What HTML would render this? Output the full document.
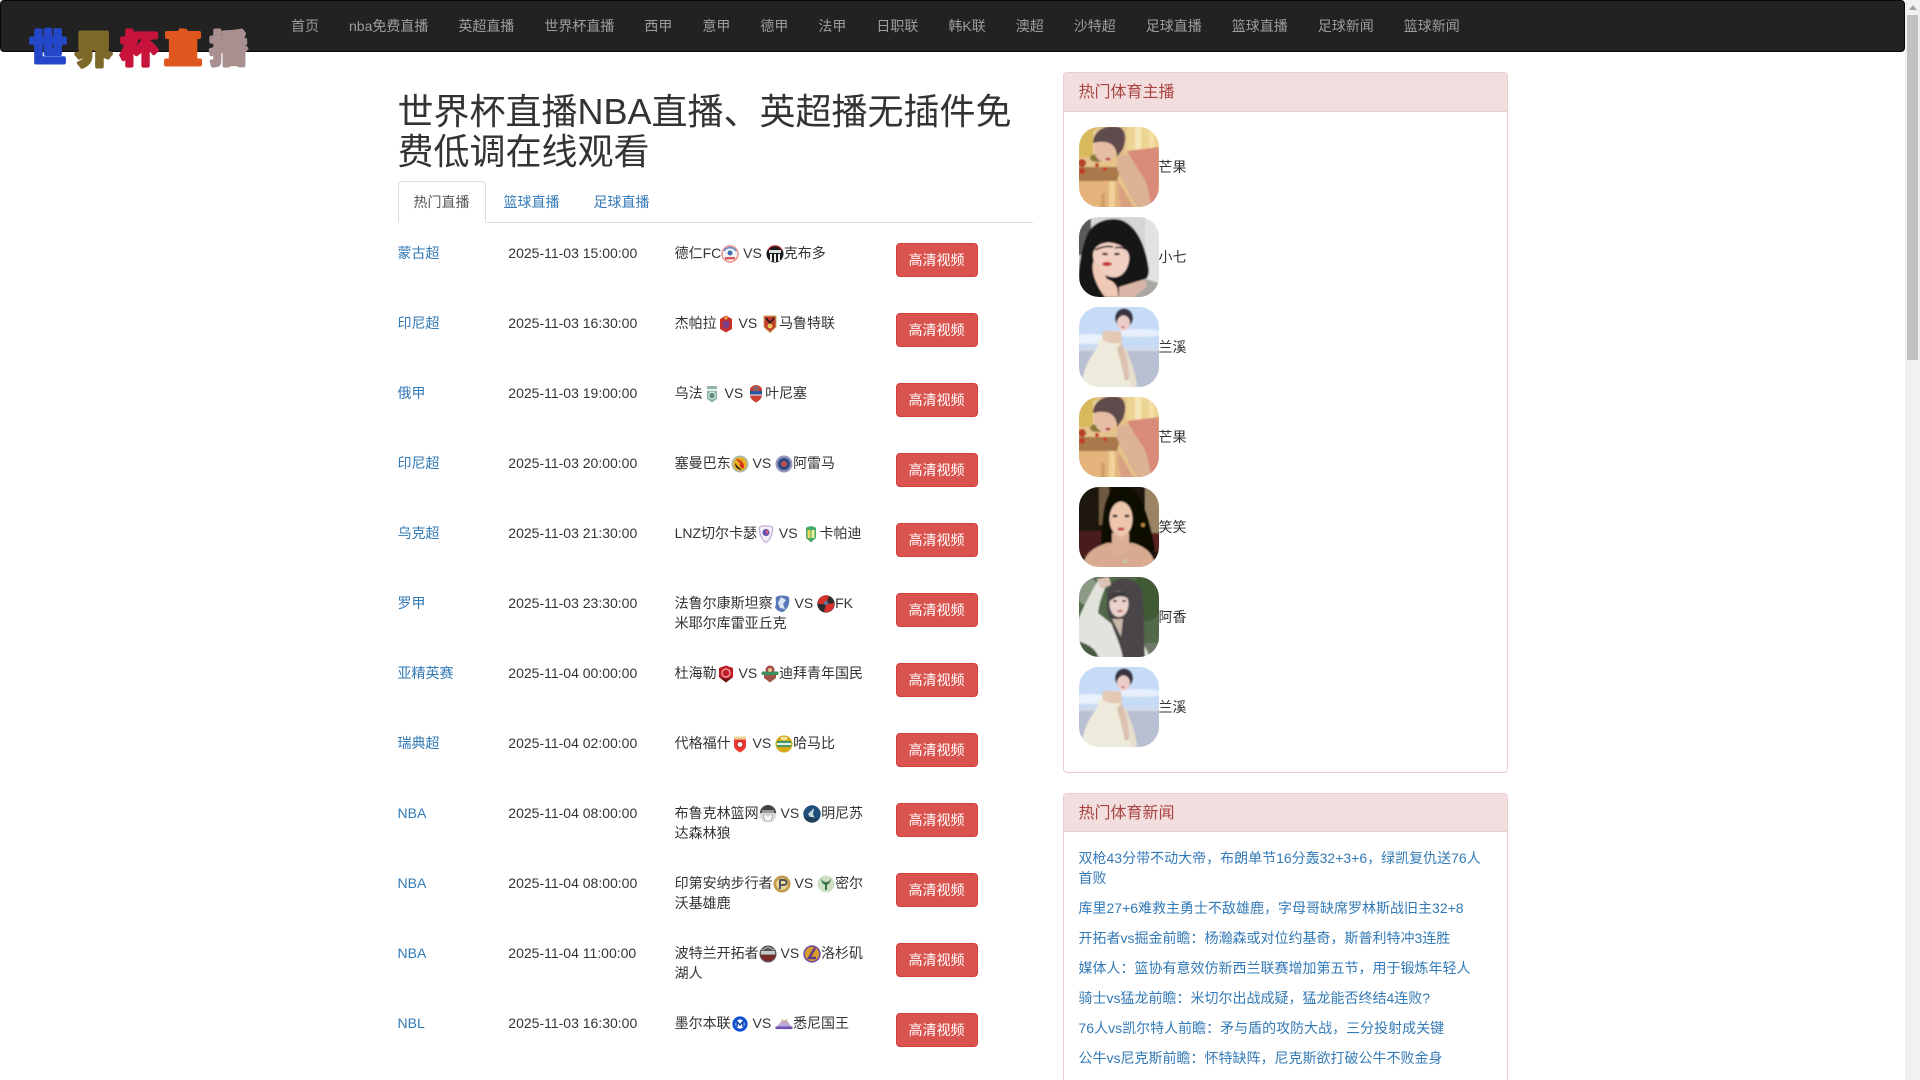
<!DOCTYPE html>
<html lang="zh-CN">
<head>
<meta charset="utf-8">
<title>世界杯直播</title>
<style>
*{box-sizing:border-box}
html,body{margin:0;padding:0;width:1920px;height:1080px;overflow:hidden;background:#fff}
body{font:14px/20px "Liberation Sans","WenQuanYi Zen Hei",sans-serif;color:#333;position:relative}
a{color:#337ab7;text-decoration:none}
.navbar{position:absolute;left:0;top:0;width:1905px;height:52px;background:#222;border:1px solid #080808;border-radius:4px}
.nav{position:absolute;left:275px;top:0;white-space:nowrap;display:flex}
.nav a{color:#9d9d9d;padding:15px;line-height:20px;display:block}
.logo{position:absolute;left:0;top:0;z-index:5}
.sb{position:absolute;left:1905px;top:0;width:15px;height:1080px;background:#f1f1f1}
.sb i{position:absolute;left:2px;top:15px;width:11px;height:345px;background:#c1c1c1}
.sb b{position:absolute;left:3.5px;top:5px;width:0;height:0;border-left:4px solid transparent;border-right:4px solid transparent;border-bottom:5px solid #a3a3a3}
h1{position:absolute;left:397.5px;top:92px;width:635px;margin:0;font-size:36px;line-height:39.6px;font-weight:500;color:#333}
.tabs{position:absolute;left:397.5px;top:181px;width:635px;height:42px;border-bottom:1px solid #ddd;display:flex}
.tabs a{display:block;padding:10px 15px;line-height:20px;margin-right:2px;height:42px;border:1px solid transparent;border-radius:4px 4px 0 0}
.tabs a.on{color:#555;background:#fff;border:1px solid #ddd;border-bottom-color:#fff}
.row{position:absolute;left:382.5px;width:665px}
.row>div{position:absolute;top:0}
.c1{left:15px}
.c2{left:125.8px;white-space:nowrap}
.c3{left:292.1px;width:191.7px}
.c3 svg{vertical-align:middle}
.btn{left:513px;width:82px;height:34px;background:#d9534f;border:1px solid #d43f3a;border-radius:4px;color:#fff;text-align:center;line-height:32px}
.panel{position:absolute;left:1062.5px;width:445px;border:1px solid #ebccd1;border-radius:4px;background:#fff}
.ph{background:#f2dede;color:#a94442;border-bottom:1px solid #ebccd1;padding:11px 15px 0;font-size:16px;line-height:18px;height:38.6px;border-radius:3px 3px 0 0}
.anchors{padding:15px 15px 5px}
.an{height:90px}
.an span{vertical-align:middle}
.an .av{display:inline-block;width:80px;height:80px;border-radius:20px;overflow:hidden;vertical-align:middle}
.av svg{display:block}
.news{padding:15.4px 15px 15px}
.news a{display:block;margin-bottom:10px}
</style>
</head>
<body>
<svg width="0" height="0" style="position:absolute">
<defs>
<filter id="bl" x="-10%" y="-10%" width="120%" height="120%"><feGaussianBlur stdDeviation="0.9"/></filter>
<symbol id="p1" viewBox="0 0 80 80"><g filter="url(#bl)">
<rect x="-2" y="-2" width="84" height="84" fill="#e5c38a"/>
<rect x="-2" y="-2" width="18" height="32" fill="#d8b95c"/>
<rect x="48" y="-2" width="34" height="26" fill="#ecd494"/>
<rect x="56" y="0" width="6" height="24" fill="#f6e7b8"/>
<rect x="70" y="0" width="5" height="24" fill="#f4dfa6"/>
<rect x="14" y="4" width="18" height="26" fill="#e9d2a0"/>
<path d="M-2 40H42L38 54H-2Z" fill="#a9794c"/>
<path d="M-2 54H40V82H-2Z" fill="#e4b47c"/>
<rect x="30" y="54" width="6" height="28" fill="#f0d29a"/>
<rect x="22" y="66" width="4" height="16" fill="#cfa068"/>
<circle cx="3" cy="36" r="4" fill="#b8402a"/><circle cx="3" cy="44" r="3" fill="#c23a26"/>
<circle cx="18" cy="38" r="2" fill="#c83a26"/><circle cx="26" cy="42" r="2" fill="#c43a28"/>
<ellipse cx="18" cy="31" rx="7" ry="4" fill="#8a7a3a"/>
<path d="M38 30C48 24 62 30 70 38L80 42V82H60C50 70 44 52 38 42Z" fill="#dcb394"/>
<path d="M48 24L80 20V76L72 80C70 66 68 52 60 44Z" fill="#d98a78"/>
<path d="M40 56C46 64 50 74 56 82H42C40 72 38 62 40 56Z" fill="#d8a080"/>
<ellipse cx="26" cy="22" rx="11" ry="13" fill="#e6bda5"/>
<path d="M14 16C14 2 30 -3 40 0C48 3 47 14 44 22L38 30C38 22 34 16 26 15C20 14 16 16 14 16Z" fill="#5e4c4c"/>
<ellipse cx="29" cy="32" rx="2.5" ry="1.3" fill="#b33a3a"/>
</g></symbol>
<symbol id="p2" viewBox="0 0 80 80"><g filter="url(#bl)">
<rect x="-2" y="-2" width="84" height="84" fill="#d6d6d6"/>
<rect x="-2" y="-2" width="14" height="40" fill="#5a5a5a"/>
<rect x="66" y="0" width="16" height="80" fill="#e2e2e2"/>
<path d="M2 82C-4 60 2 34 8 18C14 4 30 0 42 3C56 8 64 24 68 42C70 52 72 60 64 64C54 68 44 70 38 82Z" fill="#141214"/>
<path d="M50 72L66 62L80 66V82H46Z" fill="#a9a7a2"/>
<path d="M40 70L66 62L68 70L52 82H40Z" fill="#d8b5a6"/>
<path d="M14 38C14 28 26 24 34 26C44 28 52 34 50 44C48 56 40 62 32 60C22 58 14 50 14 38Z" fill="#f1d0c2"/>
<path d="M15 44C22 48 26 58 28 62C34 64 40 68 39 80H26C18 70 12 56 14 46Z" fill="#efc8b6"/>
<path d="M16 33Q26 28 34 30M36 31Q42 29 48 33" stroke="#2a1f1f" stroke-width="1.6" fill="none"/>
<ellipse cx="26" cy="37" rx="3" ry="1.3" fill="#33282a"/><ellipse cx="38" cy="37" rx="3" ry="1.3" fill="#33282a"/>
<ellipse cx="28" cy="47" rx="5" ry="2" fill="#c6323e"/>
</g></symbol>
<symbol id="p3" viewBox="0 0 80 80"><g filter="url(#bl)">
<rect x="-2" y="-2" width="84" height="84" fill="#c6dbf6"/>
<ellipse cx="60" cy="26" rx="26" ry="4" fill="#e6effb"/>
<ellipse cx="12" cy="32" rx="22" ry="5" fill="#eaf1fb"/>
<rect x="-2" y="40" width="84" height="42" fill="#b9bfd2"/>
<path d="M-2 40H82V44H-2Z" fill="#d2d9e8"/>
<ellipse cx="45" cy="11" rx="9" ry="9.5" fill="#38363f"/>
<ellipse cx="44.5" cy="16" rx="6.5" ry="7.5" fill="#ecccc8"/>
<path d="M24 24L42 24L44 48L22 46Z" fill="#e3c8b4"/>
<path d="M38 82L46 40C52 54 58 70 58 82Z" fill="#e7dfce"/>
<path d="M22 30C26 38 38 36 42 36L46 46L48 60L52 82H4C2 70 6 58 16 44Z" fill="#efebdc"/>
<path d="M42 36C48 46 50 58 50 72L46 74C44 62 40 50 38 42Z" fill="#dcc1b0"/>
<ellipse cx="44" cy="20" rx="1.5" ry="0.8" fill="#b02a30"/>
</g></symbol>
<symbol id="p4" viewBox="0 0 80 80"><g filter="url(#bl)">
<rect x="-2" y="-2" width="84" height="84" fill="#1a120c"/>
<rect x="20" y="-2" width="10" height="40" fill="#6e5a40"/>
<rect x="66" y="-2" width="16" height="50" fill="#9a8464"/>
<rect x="-2" y="44" width="24" height="26" fill="#4a1f1c"/>
<rect x="70" y="46" width="12" height="18" fill="#5a2320"/>
<path d="M21 82C24 40 20 4 42 -2C62 -2 70 30 76 62L60 82Z" fill="#0e0806"/>
<path d="M4 82C4 66 16 60 28 56H54C66 60 76 66 76 82Z" fill="#d8aa90"/>
<path d="M33 46H50V64C46 68 37 68 33 64Z" fill="#dcb098"/>
<ellipse cx="42" cy="32" rx="11.5" ry="17.5" fill="#ecc6ad"/>
<path d="M30 26C32 10 52 10 54 26C50 16 44 14 42 12C38 16 33 18 30 26Z" fill="#1a0f0a"/>
<ellipse cx="36" cy="29" rx="2.6" ry="1.2" fill="#2b1c18"/><ellipse cx="48" cy="29" rx="2.6" ry="1.2" fill="#2b1c18"/>
<ellipse cx="42" cy="42" rx="3.6" ry="1.5" fill="#c0353b"/>
<circle cx="64" cy="38" r="2" fill="#b98a3e"/>
<circle cx="46" cy="74" r="2" fill="#c8c8b0"/>
</g></symbol>
<symbol id="p5" viewBox="0 0 80 80"><g filter="url(#bl)">
<rect x="-2" y="-2" width="84" height="84" fill="#51684a"/>
<ellipse cx="68" cy="20" rx="16" ry="24" fill="#3f5a36"/>
<ellipse cx="8" cy="14" rx="12" ry="14" fill="#8a9a84"/>
<rect x="-2" y="68" width="30" height="14" fill="#4a5a44"/>
<rect x="60" y="66" width="22" height="16" fill="#6e7a66"/>
<path d="M-2 46C4 30 14 12 20 2L28 6C24 16 20 26 19 36L34 48L46 60L66 70L72 82H20C18 72 8 66 -2 64Z" fill="#e3e3de"/>
<path d="M28 14C32 -2 56 -2 62 12C66 28 64 54 66 82H44C42 66 32 50 28 32Z" fill="#49454a"/>
<ellipse cx="40" cy="27" rx="9.5" ry="13" fill="#e8d2ca"/>
<path d="M31 20C36 12 46 12 50 22C44 18 38 18 31 24Z" fill="#3e3a3e"/>
<ellipse cx="36" cy="24" rx="2" ry="1" fill="#352c2c"/><ellipse cx="45" cy="24" rx="2" ry="1" fill="#352c2c"/>
<ellipse cx="41" cy="34" rx="2.6" ry="1.1" fill="#c05a60"/>
<path d="M33 42L42 60L44 42Z" fill="#c8b8a8"/>
<path d="M18 2L30 0L32 8L22 12Z" fill="#dcc2b6"/>
</g></symbol>
</defs>
</svg>

<div class="navbar">
<div class="nav"><a href="#">首页</a><a href="#">nba免费直播</a><a href="#">英超直播</a><a href="#">世界杯直播</a><a href="#">西甲</a><a href="#">意甲</a><a href="#">德甲</a><a href="#">法甲</a><a href="#">日职联</a><a href="#">韩K联</a><a href="#">澳超</a><a href="#">沙特超</a><a href="#">足球直播</a><a href="#">篮球直播</a><a href="#">足球新闻</a><a href="#">篮球新闻</a></div>
</div>

<svg class="logo" width="270" height="80" font-family="'WenQuanYi Zen Hei','Noto Sans CJK SC',sans-serif" font-weight="700" font-size="37" stroke-width="4" stroke-linejoin="round" stroke-linecap="round">
<text x="29.5" y="61" fill="#2347c8" stroke="#2347c8">世</text>
<text x="75" y="63" fill="#7d6a2b" stroke="#7d6a2b">界</text>
<text x="120.5" y="62" fill="#c8143c" stroke="#c8143c">杯</text>
<text x="164.5" y="62" fill="#e0561f" stroke="#e0561f">直</text>
<text x="210" y="62" fill="#a89090" stroke="#a89090">播</text>
</svg>

<div class="sb"><b></b><i></i></div>

<h1>世界杯直播NBA直播、英超播无插件免费低调在线观看</h1>
<div class="tabs"><a class="on" href="#">热门直播</a><a href="#">篮球直播</a><a href="#">足球直播</a></div>

<div class="row" style="top:243px"><div class="c1"><a href="#">蒙古超</a></div><div class="c2">2025-11-03 15:00:00</div><div class="c3">德仁FC<svg width="18" height="18" viewBox="0 0 18 18"><circle cx="9" cy="9" r="8" fill="#f4f4f4" stroke="#e98a86" stroke-width="1.4"/><path d="M3 6A7 7 0 0 1 15 6" stroke="#5d8fd0" stroke-width="1.5" fill="none"/><circle cx="9" cy="8" r="2.5" fill="#3b6db0"/><rect x="4" y="12" width="10" height="2.4" fill="#dc5a56"/></svg> VS <svg width="18" height="18" viewBox="0 0 18 18"><circle cx="9" cy="9" r="8.5" fill="#1a1a1a"/><rect x="4" y="9" width="2" height="7" fill="#eee"/><rect x="8" y="9" width="2" height="8" fill="#eee"/><rect x="12" y="9" width="2" height="7" fill="#eee"/><rect x="3" y="5" width="12" height="3" fill="#ddd"/><path d="M2 5A8 8 0 0 1 16 5" stroke="#b8282c" stroke-width="1.2" fill="none"/></svg>克布多</div><a class="btn" href="#" style="position:absolute;top:0;">高清视频</a></div>

<div class="row" style="top:313px"><div class="c1"><a href="#">印尼超</a></div><div class="c2">2025-11-03 16:30:00</div><div class="c3">杰帕拉<svg width="18" height="18" viewBox="0 0 18 18"><path d="M9 0.5L15 4V14L9 17.5L3 14V4Z" fill="#c8302e"/><path d="M6 6H12V12L9 14L6 12Z" fill="#7a3f8a"/><circle cx="9" cy="3" r="1.5" fill="#e3b53a"/></svg> VS <svg width="18" height="18" viewBox="0 0 18 18"><path d="M3 1H15V12L9 17.5L3 12Z" fill="#c63a2e" stroke="#c2ad62" stroke-width="1"/><path d="M5 3L9 8L13 3" stroke="#1e1e1e" stroke-width="1.6" fill="none"/><circle cx="9" cy="11" r="2.5" fill="#e8c85a"/></svg>马鲁特联</div><a class="btn" href="#" style="position:absolute;top:0;">高清视频</a></div>

<div class="row" style="top:383px"><div class="c1"><a href="#">俄甲</a></div><div class="c2">2025-11-03 19:00:00</div><div class="c3">乌法<svg width="18" height="18" viewBox="0 0 18 18"><path d="M4 1H14V14L9 17.5L4 14Z" fill="#8fb5a6"/><rect x="4" y="4" width="10" height="2" fill="#e6efea"/><circle cx="9" cy="10.5" r="3.2" fill="#5c8d7c" stroke="#e6efea"/></svg> VS <svg width="18" height="18" viewBox="0 0 18 18"><path d="M3 5A6 5 0 0 1 15 5V10C15 14 11 16.5 9 17.5C7 16.5 3 14 3 10Z" fill="#c8402e"/><rect x="3" y="6" width="12" height="4" fill="#2456a4"/><circle cx="9" cy="3.5" r="3" fill="#8a6464"/><rect x="3" y="9.5" width="12" height="1" fill="#eee"/></svg>叶尼塞</div><a class="btn" href="#" style="position:absolute;top:0;">高清视频</a></div>

<div class="row" style="top:453px"><div class="c1"><a href="#">印尼超</a></div><div class="c2">2025-11-03 20:00:00</div><div class="c3">塞曼巴东<svg width="18" height="18" viewBox="0 0 18 18"><circle cx="9" cy="9" r="8.5" fill="#a9bdb0"/><circle cx="9" cy="9" r="6.8" fill="#e8b020"/><path d="M5 4C9 4 14 8 13 13C10 14 8 11 9 8C8 7 6 6 5 4Z" fill="#d9321e"/><path d="M4 8C4 12 7 15 11 15C8 13 6 11 4 8Z" fill="#1c1c1c"/></svg> VS <svg width="18" height="18" viewBox="0 0 18 18"><circle cx="9" cy="9" r="8.5" fill="#8b93b8"/><circle cx="9" cy="9" r="6" fill="#36477f"/><circle cx="9" cy="9" r="2.8" fill="#c8504e"/></svg>阿雷马</div><a class="btn" href="#" style="position:absolute;top:0;">高清视频</a></div>

<div class="row" style="top:523px"><div class="c1"><a href="#">乌克超</a></div><div class="c2">2025-11-03 21:30:00</div><div class="c3">LNZ切尔卡瑟<svg width="18" height="18" viewBox="0 0 18 18"><path d="M2.5 2C6 0.5 12 0.5 15.5 2C16 9 13 15 9 17.5C5 15 2 9 2.5 2Z" fill="#f3f0f8" stroke="#c2a8d8" stroke-width="1.2"/><circle cx="9" cy="7.5" r="3.5" fill="#5e4fa8"/><circle cx="10" cy="7" r="1.6" fill="#d8548a"/></svg> VS <svg width="18" height="18" viewBox="0 0 18 18"><path d="M4 3C7 0.5 11 0.5 14 3V13L9 17.5L4 13Z" fill="#49ac6c"/><rect x="5.5" y="5" width="3" height="8" fill="#e9d85c"/><rect x="9.5" y="5" width="3" height="8" fill="#f2ef9e"/></svg>卡帕迪</div><a class="btn" href="#" style="position:absolute;top:0;">高清视频</a></div>

<div class="row" style="top:593px"><div class="c1"><a href="#">罗甲</a></div><div class="c2">2025-11-03 23:30:00</div><div class="c3">法鲁尔康斯坦察<svg width="18" height="18" viewBox="0 0 18 18"><path d="M3 2C6 0 12 0 16 2C17 7 16 13 10 17C6 17 3 15 2 12C4 8 2 5 3 2Z" fill="#5878ba"/><path d="M8 2L13 5L10 9L12 14L7 13L5 8Z" fill="#dfe6f3"/></svg> VS <svg width="18" height="18" viewBox="0 0 18 18"><circle cx="9" cy="9" r="8.7" fill="#2c2c2c"/><path d="M1 9A8 8 0 0 1 12 1L9 9Z" fill="#d8302c"/><path d="M9 9L17 8A8 8 0 0 1 7 17Z" fill="#d8302c"/><circle cx="9" cy="8" r="2" fill="#5a7a9a"/></svg>FK米耶尔库雷亚丘克</div><a class="btn" href="#" style="position:absolute;top:0;">高清视频</a></div>

<div class="row" style="top:663px"><div class="c1"><a href="#">亚精英赛</a></div><div class="c2">2025-11-04 00:00:00</div><div class="c3">杜海勒<svg width="18" height="18" viewBox="0 0 18 18"><path d="M2 3L9 0.5L16 3V12L9 17.5L2 12Z" fill="#c21c26"/><circle cx="9" cy="8" r="4" fill="none" stroke="#f6b0b0" stroke-width="1.2"/><path d="M2 12L9 17.5L16 12L9 14Z" fill="#6a1414"/></svg> VS <svg width="18" height="18" viewBox="0 0 18 18"><circle cx="9" cy="5" r="4.5" fill="#a8464a"/><rect x="0.5" y="6.5" width="17" height="3.5" rx="1.5" fill="#3b8f5a"/><path d="M3 10H15V13L9 17.5L3 13Z" fill="#a0544a"/><circle cx="9" cy="5" r="2" fill="#e6c88a"/></svg>迪拜青年国民</div><a class="btn" href="#" style="position:absolute;top:0;">高清视频</a></div>

<div class="row" style="top:733px"><div class="c1"><a href="#">瑞典超</a></div><div class="c2">2025-11-04 02:00:00</div><div class="c3">代格福什<svg width="18" height="18" viewBox="0 0 18 18"><path d="M3 1.5H15V11C15 14 11 16.5 9 17.5C7 16.5 3 14 3 11Z" fill="#ef3a30"/><rect x="3" y="1.5" width="12" height="3" fill="#e8d49a"/><circle cx="9" cy="9.5" r="3" fill="#fff" stroke="#b81e1e"/></svg> VS <svg width="18" height="18" viewBox="0 0 18 18"><circle cx="9" cy="9" r="8.5" fill="#d8a818"/><rect x="2" y="6" width="14" height="6" fill="#3c9a6a"/><rect x="2" y="8" width="14" height="2" fill="#eef3e8"/><rect x="6" y="2" width="6" height="3" fill="#f2e6a0"/></svg>哈马比</div><a class="btn" href="#" style="position:absolute;top:0;">高清视频</a></div>

<div class="row" style="top:803px"><div class="c1"><a href="#">NBA</a></div><div class="c2">2025-11-04 08:00:00</div><div class="c3">布鲁克林篮网<svg width="18" height="18" viewBox="0 0 18 18"><circle cx="9" cy="9" r="8.5" fill="#d8dcdc"/><path d="M1 8A8 8 0 0 1 17 8Z" fill="#444"/><rect x="3" y="5" width="12" height="3" fill="#9a9a9a"/><path d="M4 10H14L12 16H6Z" fill="#f4f4f4" stroke="#999" stroke-width=".6"/></svg> VS <svg width="18" height="18" viewBox="0 0 18 18"><circle cx="9" cy="9" r="8.7" fill="#1f4f7a"/><path d="M5 9L11 3L10 9L12 14L7 12Z" fill="#c8d8d8"/><path d="M1 12A8.7 8.7 0 0 0 16 14L9 12Z" fill="#1d3f5e"/></svg>明尼苏达森林狼</div><a class="btn" href="#" style="position:absolute;top:0;">高清视频</a></div>

<div class="row" style="top:873px"><div class="c1"><a href="#">NBA</a></div><div class="c2">2025-11-04 08:00:00</div><div class="c3">印第安纳步行者<svg width="18" height="18" viewBox="0 0 18 18"><circle cx="9" cy="9" r="8.5" fill="#c09a48"/><circle cx="9" cy="9" r="5.8" fill="#efd796"/><path d="M7 14V5H11A2.5 2.5 0 0 1 11 10H8" stroke="#3d4a5a" stroke-width="1.8" fill="none"/></svg> VS <svg width="18" height="18" viewBox="0 0 18 18"><circle cx="9" cy="9" r="8.5" fill="#cfe0c6"/><path d="M4 3C4 7 6 9 8 10V15H10V10C12 9 14 7 14 3C13 6 11 7 9 7C7 7 5 6 4 3Z" fill="#3d7a48"/></svg>密尔沃基雄鹿</div><a class="btn" href="#" style="position:absolute;top:0;">高清视频</a></div>

<div class="row" style="top:943px"><div class="c1"><a href="#">NBA</a></div><div class="c2">2025-11-04 11:00:00</div><div class="c3">波特兰开拓者<svg width="18" height="18" viewBox="0 0 18 18"><circle cx="9" cy="9" r="8.5" fill="#555"/><path d="M1 10H17A8 8 0 0 1 2 12Z" fill="#7a2a2a"/><rect x="2" y="6" width="14" height="3.5" fill="#c8c8c8"/><path d="M3 5L9 2L15 5" stroke="#bbb" fill="none"/></svg> VS <svg width="18" height="18" viewBox="0 0 18 18"><circle cx="9" cy="9" r="8.7" fill="#7a4fa0"/><circle cx="9" cy="9" r="7" fill="#d8a02a"/><path d="M12 3L6 13H13" stroke="#5c3a88" stroke-width="2.4" fill="none"/></svg>洛杉矶湖人</div><a class="btn" href="#" style="position:absolute;top:0;">高清视频</a></div>

<div class="row" style="top:1013px"><div class="c1"><a href="#">NBL</a></div><div class="c2">2025-11-03 16:30:00</div><div class="c3">墨尔本联<svg width="18" height="18" viewBox="0 0 18 18"><circle cx="9" cy="9" r="7.6" fill="#0a4fd0"/><circle cx="9" cy="9" r="4.6" fill="#fff"/><path d="M6 12V6.5L9 10L12 6.5V12" stroke="#0a3fb0" stroke-width="1.5" fill="none"/></svg> VS <svg width="18" height="18" viewBox="0 0 18 18"><path d="M0.5 13L5 8L8 6L10 5L13 7L17.5 13Z" fill="#b9a8d8"/><rect x="0.5" y="11.5" width="17" height="2.6" fill="#6f4fb0"/><path d="M6 8L8 4M10 8L12 4" stroke="#d8a060" stroke-width="1"/></svg>悉尼国王</div><a class="btn" href="#" style="position:absolute;top:0;">高清视频</a></div>

<div class="panel" style="top:72px;height:700.6px">
<div class="ph">热门体育主播</div>
<div class="anchors">
<div class="an"><span class="av"><svg width="80" height="80"><use href="#p1"/></svg></span><span>芒果</span></div>
<div class="an"><span class="av"><svg width="80" height="80"><use href="#p2"/></svg></span><span>小七</span></div>
<div class="an"><span class="av"><svg width="80" height="80"><use href="#p3"/></svg></span><span>兰溪</span></div>
<div class="an"><span class="av"><svg width="80" height="80"><use href="#p1"/></svg></span><span>芒果</span></div>
<div class="an"><span class="av"><svg width="80" height="80"><use href="#p4"/></svg></span><span>笑笑</span></div>
<div class="an"><span class="av"><svg width="80" height="80"><use href="#p5"/></svg></span><span>阿香</span></div>
<div class="an"><span class="av"><svg width="80" height="80"><use href="#p3"/></svg></span><span>兰溪</span></div>
</div>
</div>

<div class="panel" style="top:792.6px;height:287.4px;border-bottom:0;border-radius:4px 4px 0 0;overflow:hidden">
<div class="ph">热门体育新闻</div>
<div class="news">
<a href="#">双枪43分带不动大帝，布朗单节16分轰32+3+6，绿凯复仇送76人首败</a>
<a href="#">库里27+6难救主勇士不敌雄鹿，字母哥缺席罗林斯战旧主32+8</a>
<a href="#">开拓者vs掘金前瞻：杨瀚森或对位约基奇，斯普利特冲3连胜</a>
<a href="#">媒体人：篮协有意效仿新西兰联赛增加第五节，用于锻炼年轻人</a>
<a href="#">骑士vs猛龙前瞻：米切尔出战成疑，猛龙能否终结4连败?</a>
<a href="#">76人vs凯尔特人前瞻：矛与盾的攻防大战，三分投射成关键</a>
<a href="#">公牛vs尼克斯前瞻：怀特缺阵，尼克斯欲打破公牛不败金身</a>
</div>
</div>
</body>
</html>
